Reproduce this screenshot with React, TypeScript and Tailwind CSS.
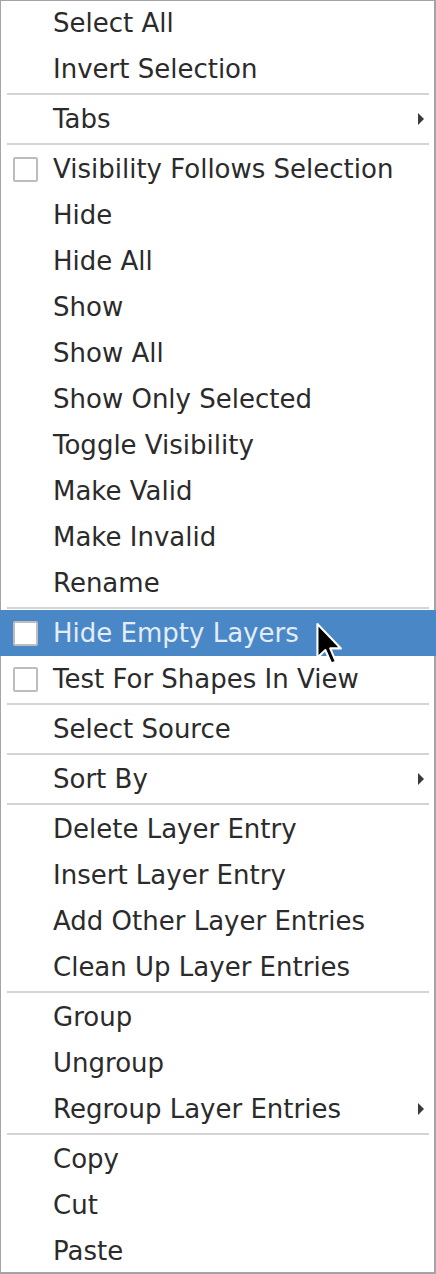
import React from "react";

type Item =
  | { kind: "sep" }
  | { kind: "item"; label: string; check?: boolean; sub?: boolean; active?: boolean };

const items: Item[] = [
  { kind: "item", label: "Select All" },
  { kind: "item", label: "Invert Selection" },
  { kind: "sep" },
  { kind: "item", label: "Tabs", sub: true },
  { kind: "sep" },
  { kind: "item", label: "Visibility Follows Selection", check: true },
  { kind: "item", label: "Hide" },
  { kind: "item", label: "Hide All" },
  { kind: "item", label: "Show" },
  { kind: "item", label: "Show All" },
  { kind: "item", label: "Show Only Selected" },
  { kind: "item", label: "Toggle Visibility" },
  { kind: "item", label: "Make Valid" },
  { kind: "item", label: "Make Invalid" },
  { kind: "item", label: "Rename" },
  { kind: "sep" },
  { kind: "item", label: "Hide Empty Layers", check: true, active: true },
  { kind: "item", label: "Test For Shapes In View", check: true },
  { kind: "sep" },
  { kind: "item", label: "Select Source" },
  { kind: "sep" },
  { kind: "item", label: "Sort By", sub: true },
  { kind: "sep" },
  { kind: "item", label: "Delete Layer Entry" },
  { kind: "item", label: "Insert Layer Entry" },
  { kind: "item", label: "Add Other Layer Entries" },
  { kind: "item", label: "Clean Up Layer Entries" },
  { kind: "sep" },
  { kind: "item", label: "Group" },
  { kind: "item", label: "Ungroup" },
  { kind: "item", label: "Regroup Layer Entries", sub: true },
  { kind: "sep" },
  { kind: "item", label: "Copy" },
  { kind: "item", label: "Cut" },
  { kind: "item", label: "Paste" },
];

function Cursor() {
  return (
    <svg
      className="absolute left-[315px] top-[12px] pointer-events-none"
      width="30"
      height="44"
      viewBox="-1 -1 14 21"
    >
      <path
        d="M0 0 L0 16 L3.8 12.4 L6.6 18.8 L8.8 17.9 L6.1 11.6 L11.2 11.6 Z"
        fill="#000"
        stroke="#fff"
        strokeWidth="1"
        strokeLinejoin="round"
      />
    </svg>
  );
}

export default function App() {
  return (
    <div
      className="relative w-[436px] h-[1274px] bg-white overflow-hidden shadow-[inset_1px_1px_0_#a4a4a4,inset_-2px_-2px_0_#a4a4a4]"
      style={{ fontFamily: '"DejaVu Sans", "Liberation Sans", sans-serif' }}
    >
      {items.map((it, i) =>
        it.kind === "sep" ? (
          <div key={i} className="h-[4px] flex items-center px-[7px]">
            <div className="h-[2px] w-full bg-[#d4d4d4]" />
          </div>
        ) : (
          <div
            key={i}
            className={
              it.active
                ? "relative h-[46px] flex items-center bg-[#4a87c6] text-[#e2edf8]"
                : "relative h-[46px] flex items-center text-[#2b2b2b]"
            }
          >
            <div className="w-[53px] shrink-0 flex items-center pl-[13px]">
              {it.check && (
                <div className="w-[25px] h-[25px] rounded-[2px] border-2 border-[#bdbdbd] bg-white" />
              )}
            </div>
            <span className="text-[26px] leading-none">{it.label}</span>
            {it.sub && (
              <svg
                className="absolute left-[418px] top-[17px]"
                width="7"
                height="12"
                viewBox="0 0 7 12"
              >
                <path d="M0 0 L6 6 L0 12 Z" fill="#3a3a3a" />
              </svg>
            )}
            {it.active && <Cursor />}
          </div>
        )
      )}
    </div>
  );
}
